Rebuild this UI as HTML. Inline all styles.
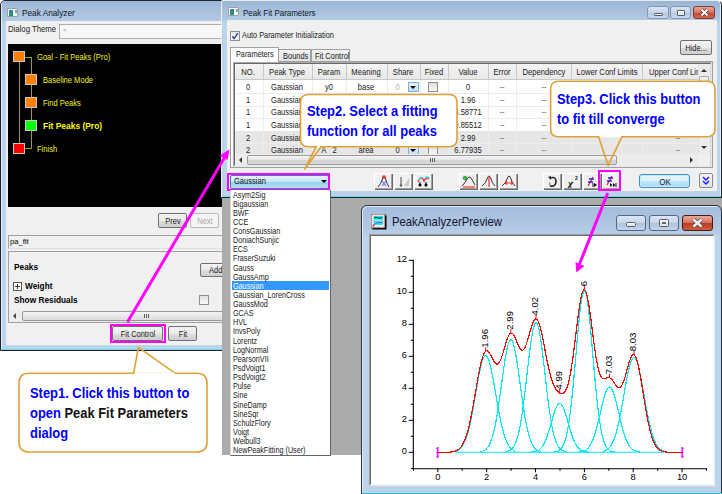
<!DOCTYPE html>
<html><head><meta charset="utf-8">
<style>
*{margin:0;padding:0;box-sizing:border-box}
html,body{width:722px;height:494px;overflow:hidden;background:#fff;font-family:"Liberation Sans",sans-serif;color:#000}
.a{position:absolute}
.t{position:absolute;white-space:nowrap;line-height:1}
.win{position:absolute;border:1px solid #2b3a4a;background:#bcd3ec}
.sx{transform-origin:0 0;transform:scaleX(.86)}
.btn{position:absolute;border:1px solid #707070;border-radius:2px;background:linear-gradient(#f2f2f2,#ebebeb 50%,#dddddd 51%,#cfcfcf);text-align:center}
.btn span{position:absolute;left:50%;top:2.5px;white-space:nowrap;font-size:9px;line-height:1;color:#1a1a1a;transform:translateX(-50%) scaleX(.83)}
</style></head><body>

<!-- gray workspace background -->
<div class="a" style="left:222px;top:197px;width:500px;height:258px;background:#ababab"></div>

<!-- ============ LEFT WINDOW: Peak Analyzer ============ -->
<div class="a" style="left:0;top:0;width:222px;height:351px;overflow:hidden">
 <div class="a" style="left:0;top:0;width:260px;height:351px;border:1px solid #1a2430;box-shadow:inset 1px 0 0 #e8f0f8;border-radius:5px 5px 0 0;background:linear-gradient(#9cb6d5,#b4cbe6 20px,#bcd3ec 21px)"></div>
 <div class="a" style="left:7px;top:8px;width:11px;height:9px;border:1px solid #9aa0a8;border-radius:1px;background:#f6f8fa"><div class="a" style="left:1px;top:1px;width:4px;height:6px;background:linear-gradient(#3a7ab8,#20a050)"></div><div class="a" style="left:7px;top:1px;width:2px;height:3px;background:linear-gradient(#80a8d0,#60c060)"></div></div>
 <div class="t sx" style="left:22px;top:8px;font-size:9.6px;color:#0e1626">Peak Analyzer</div>
 <div class="a" style="left:6px;top:21px;width:260px;height:324px;background:#f0f0f0"></div>
 <div class="a" style="left:1px;top:349px;width:260px;height:1px;background:#6ad8f0"></div>
 <div class="t sx" style="left:8px;top:24.5px;font-size:9px;color:#222">Dialog Theme</div>
 <div class="a" style="left:59px;top:24px;width:200px;height:15px;border:1px solid #abadb3;background:#f7f7f7"></div>
 <div class="t" style="left:63px;top:27px;font-size:6px;color:#aaa">×</div>
 <!-- black panel -->
 <div class="a" style="left:8px;top:44px;width:214px;height:163px;background:#000"></div>
 <!-- tree lines -->
 <div class="a" style="left:19px;top:57px;width:1px;height:92px;background:#a0a000"></div>
 <div class="a" style="left:25px;top:57px;width:6px;height:1px;background:#a0a000"></div>
 <div class="a" style="left:31px;top:57px;width:1px;height:92px;background:#a0a000"></div>
 <div class="a" style="left:25px;top:148px;width:6px;height:1px;background:#a0a000"></div>
 <!-- boxes -->
 <div class="a" style="left:13px;top:51px;width:12px;height:11px;border:1px solid #c8c8c8;background:#ff8000"></div>
 <div class="a" style="left:25px;top:74px;width:12px;height:11px;border:1px solid #c8c8c8;background:#ff8000"></div>
 <div class="a" style="left:25px;top:97px;width:12px;height:11px;border:1px solid #c8c8c8;background:#ff8000"></div>
 <div class="a" style="left:25px;top:120px;width:12px;height:11px;border:1px solid #c8c8c8;background:#00ff00"></div>
 <div class="a" style="left:13px;top:143px;width:12px;height:11px;border:1px solid #c8c8c8;background:#ff0000"></div>
 <div class="t sx" style="left:36.5px;top:53px;font-size:8.8px;color:#f0f020">Goal - Fit Peaks (Pro)</div>
 <div class="t sx" style="left:42.5px;top:76px;font-size:8.8px;color:#f0f020">Baseline Mode</div>
 <div class="t sx" style="left:42.5px;top:99px;font-size:8.8px;color:#f0f020">Find Peaks</div>
 <div class="t" style="left:42.5px;top:121px;font-size:9.6px;font-weight:bold;color:#ffff00;transform-origin:0 0;transform:scaleX(.88)">Fit Peaks (Pro)</div>
 <div class="t sx" style="left:36.5px;top:145px;font-size:8.8px;color:#f0f020">Finish</div>
 <!-- prev next -->
 <div class="btn" style="left:158px;top:213px;width:29px;height:15px"><span>Prev</span></div>
 <div class="btn" style="left:190px;top:213px;width:29px;height:15px;border-color:#b8b8b8;background:#f4f4f4"><span style="color:#a8a8a8">Next</span></div>
 <!-- pa_fit -->
 <div class="a" style="left:8px;top:235px;width:240px;height:14px;border:1px solid #a0a0a0;border-bottom-color:#e0e0e0;border-right:none;background:#f0f0f0"></div>
 <div class="t" style="left:10px;top:238px;font-size:7.6px">pa_fit</div>
 <!-- panel -->
 <div class="a" style="left:8px;top:251px;width:240px;height:72px;border:1px solid #a0a0a0;border-right:none"></div>
 <div class="t" style="left:14px;top:263px;font-size:8.3px;font-weight:bold">Peaks</div>
 <div class="btn" style="left:200px;top:263px;width:30px;height:14px"><span style="left:7.5px;top:1.5px;transform:scaleX(.83);transform-origin:0 0">Add</span></div>
 <div class="a" style="left:13px;top:282px;width:9px;height:9px;border:1px solid #555;background:#fff"></div>
 <div class="a" style="left:15px;top:286px;width:5px;height:1px;background:#333"></div>
 <div class="a" style="left:17px;top:284px;width:1px;height:5px;background:#333"></div>
 <div class="t" style="left:25px;top:282px;font-size:8.3px;font-weight:bold">Weight</div>
 <div class="t" style="left:14px;top:296px;font-size:8.3px;font-weight:bold">Show Residuals</div>
 <div class="a" style="left:199px;top:295px;width:10px;height:10px;border:1px solid #8f8f8f;background:linear-gradient(#e0e0e0,#fafafa)"></div>
 <!-- h scrollbar -->
 <div class="a" style="left:9px;top:310px;width:240px;height:12px;background:#ececec"></div>
 <div class="a" style="left:12.5px;top:313px;width:0;height:0;border-top:3px solid transparent;border-bottom:3px solid transparent;border-right:3px solid #444"></div>
 <div class="a" style="left:22px;top:311px;width:230px;height:10px;border:1px solid #999;border-radius:2px;background:linear-gradient(#f4f4f4,#dcdcdc)"></div>
 <div class="a" style="left:143.5px;top:314px;width:1px;height:4px;background:#606060;box-shadow:2px 0 0 #606060,4px 0 0 #606060"></div>
 <!-- fit control / fit -->
 <div class="btn" style="left:112px;top:326px;width:51px;height:15px"><span>Fit Control</span></div>
 <div class="btn" style="left:168px;top:326px;width:29px;height:15px"><span>Fit</span></div>
<div class="a" style="left:109.7px;top:324px;width:56px;height:18.6px;border:2.5px solid #ff00ff"></div>
</div>
<!-- ============ PFP WINDOW ============ -->
<div class="a" style="left:221px;top:0;width:501px;height:198px;overflow:hidden">
 <div class="a" style="left:0;top:0;width:501px;height:198px;border:1px solid #1a2430;border-left-color:#eef3f8;border-top-color:#e4ebf2;box-shadow:inset -1px 0 0 #e0ecf8;border-radius:2px 5px 0 0;background:linear-gradient(#9cb6d5,#b4cbe6 20px,#bcd3ec 21px)"></div>
 <div class="a" style="left:7px;top:7px;width:11px;height:9px;border:1px solid #9aa0a8;border-radius:1px;background:#f6f8fa"><div class="a" style="left:1px;top:1px;width:4px;height:6px;background:linear-gradient(#3a7ab8,#20a050)"></div><div class="a" style="left:7px;top:1px;width:2px;height:3px;background:linear-gradient(#80a8d0,#60c060)"></div></div>
 <div class="t" style="left:21.5px;top:8px;font-size:9.6px;color:#0e1626;transform-origin:0 0;transform:scaleX(.83)">Peak Fit Parameters</div>
 <!-- caption buttons -->
 <div class="a" style="left:426px;top:6px;width:22px;height:13px;border:1px solid #8598b0;border-radius:3px;background:linear-gradient(#d8e4f2,#c4d5ea 50%,#b2c7e0 51%,#c6d8ee)"></div>
 <div class="a" style="left:433px;top:12.5px;width:8.5px;height:3px;border:1px solid #555a66;border-radius:1px;background:#fff"></div>
 <div class="a" style="left:449px;top:6px;width:21px;height:13px;border:1px solid #8598b0;border-radius:3px;background:linear-gradient(#d8e4f2,#c4d5ea 50%,#b2c7e0 51%,#c6d8ee)"></div>
 <div class="a" style="left:456px;top:9.5px;width:8px;height:6px;border:1px solid #555a66;border-radius:1px;background:#e8e8e8;box-shadow:inset 1px 1px 0 #fff"></div>
 <div class="a" style="left:472px;top:6px;width:22px;height:13px;border:1px solid #7a3a30;border-radius:3px;background:linear-gradient(#eaa898,#d87060 50%,#c24a32 51%,#d06848)"></div>
 <svg class="a" style="left:477px;top:7px" width="13" height="11" viewBox="0 0 13 11"><path d="M3.5 2.5 L9.5 8.5 M9.5 2.5 L3.5 8.5" stroke="#4a2a2a" stroke-width="3.2"/><path d="M3.5 2.5 L9.5 8.5 M9.5 2.5 L3.5 8.5" stroke="#fff" stroke-width="2"/></svg>
 <div class="a" style="left:1px;top:196px;width:499px;height:1px;background:#6ad8f0"></div>
 <!-- content -->
 <div class="a" style="left:6px;top:20px;width:490px;height:171px;background:#f0f0f0"></div>
 <!-- auto param -->
 <div class="a" style="left:9px;top:31px;width:10px;height:10px;border:1px solid #8f8f8f;background:linear-gradient(#e6e6e6,#fafafa)"></div>
 <svg class="a" style="left:9px;top:31px" width="10" height="10" viewBox="0 0 10 10"><path d="M2.3 5.2 L4.2 7.6 L7.8 2.2" fill="none" stroke="#2840a8" stroke-width="1.4"/></svg>
 <div class="t" style="left:20.7px;top:31px;font-size:9.2px;color:#1a1a1a;transform-origin:0 0;transform:scaleX(.8)">Auto Parameter Initialization</div>
 <!-- hide -->
 <div class="btn" style="left:459px;top:40px;width:32px;height:15px"><span>Hide...</span></div>
 <!-- tabs -->
 <div class="a" style="left:57px;top:49px;width:33px;height:13px;border:1px solid #a0a0a0;border-bottom:none;background:linear-gradient(#f2f2f2,#e0e0e0)"></div>
 <div class="t" style="left:61.5px;top:51.5px;font-size:9px;color:#1a1a1a;transform-origin:0 0;transform:scaleX(.83)">Bounds</div>
 <div class="a" style="left:90px;top:49px;width:39px;height:13px;border:1px solid #a0a0a0;border-bottom:none;background:linear-gradient(#f2f2f2,#e0e0e0)"></div>
 <div class="t" style="left:93.5px;top:51.5px;font-size:9px;color:#1a1a1a;transform-origin:0 0;transform:scaleX(.83)">Fit Control</div>
 <div class="a" style="left:9px;top:61px;width:483px;height:107px;border:1px solid #a0a0a0;background:#fcfcfc"></div>
 <div class="a" style="left:9px;top:47px;width:49px;height:16px;border:1px solid #a0a0a0;border-bottom:none;background:#fcfcfc"></div>
 <div class="t" style="left:15.3px;top:49.5px;font-size:9px;color:#1a1a1a;transform-origin:0 0;transform:scaleX(.81)">Parameters</div>
<!-- TABLE -->
<div class="a" style="left:11.5px;top:62px;width:479px;height:105px;border:1px solid #a8a8a8;border-right-color:#e8e8e8;border-bottom-color:#e8e8e8;background:#fff"></div>
<div class="a" style="left:12.5px;top:63px;width:477px;height:103px;border:1px solid #6a6a6a;border-right-color:#d8d8d8;border-bottom-color:#d8d8d8;background:#fff"></div>
<div class="a" style="left:13.5px;top:64px;width:463px;height:16px;background:linear-gradient(#f4f4f4,#e8e8e8);border-bottom:1px solid #c8c8c8"></div>
<div class="a" style="left:13.5px;top:93.0px;width:463px;height:1px;background:#ececec"></div>
<div class="a" style="left:13.5px;top:105.6px;width:463px;height:1px;background:#ececec"></div>
<div class="a" style="left:13.5px;top:118.2px;width:463px;height:1px;background:#ececec"></div>
<div class="a" style="left:13.5px;top:130.8px;width:463px;height:1px;background:#ececec"></div>
<div class="a" style="left:13.5px;top:131.4px;width:463px;height:12.6px;background:#e6e6e6"></div>
<div class="a" style="left:13.5px;top:143.4px;width:463px;height:1px;background:#ececec"></div>
<div class="a" style="left:13.5px;top:144.0px;width:463px;height:12.6px;background:#e6e6e6"></div>
<div class="a" style="left:13.5px;top:156.0px;width:463px;height:1px;background:#ececec"></div>
<div class="a" style="left:41.6px;top:64px;width:1px;height:16px;background:#c8c8c8"></div>
<div class="a" style="left:41.6px;top:81px;width:1px;height:73px;background:#ececec"></div>
<div class="a" style="left:90.6px;top:64px;width:1px;height:16px;background:#c8c8c8"></div>
<div class="a" style="left:90.6px;top:81px;width:1px;height:73px;background:#ececec"></div>
<div class="a" style="left:124.5px;top:64px;width:1px;height:16px;background:#c8c8c8"></div>
<div class="a" style="left:124.5px;top:81px;width:1px;height:73px;background:#ececec"></div>
<div class="a" style="left:165.7px;top:64px;width:1px;height:16px;background:#c8c8c8"></div>
<div class="a" style="left:165.7px;top:81px;width:1px;height:73px;background:#ececec"></div>
<div class="a" style="left:198.7px;top:64px;width:1px;height:16px;background:#c8c8c8"></div>
<div class="a" style="left:198.7px;top:81px;width:1px;height:73px;background:#ececec"></div>
<div class="a" style="left:227.0px;top:64px;width:1px;height:16px;background:#c8c8c8"></div>
<div class="a" style="left:227.0px;top:81px;width:1px;height:73px;background:#ececec"></div>
<div class="a" style="left:266.8px;top:64px;width:1px;height:16px;background:#c8c8c8"></div>
<div class="a" style="left:266.8px;top:81px;width:1px;height:73px;background:#ececec"></div>
<div class="a" style="left:294.7px;top:64px;width:1px;height:16px;background:#c8c8c8"></div>
<div class="a" style="left:294.7px;top:81px;width:1px;height:73px;background:#ececec"></div>
<div class="a" style="left:350.3px;top:64px;width:1px;height:16px;background:#c8c8c8"></div>
<div class="a" style="left:350.3px;top:81px;width:1px;height:73px;background:#ececec"></div>
<div class="a" style="left:421.0px;top:64px;width:1px;height:16px;background:#c8c8c8"></div>
<div class="a" style="left:421.0px;top:81px;width:1px;height:73px;background:#ececec"></div>
<div class="a" style="left:477.0px;top:64px;width:1px;height:16px;background:#c8c8c8"></div>
<div class="a" style="left:477.0px;top:81px;width:1px;height:73px;background:#ececec"></div>
<div class="t" style="left:27.1px;top:67.5px;font-size:9.2px;color:#1a1a1a;transform:translateX(-50%) scaleX(.83)">NO.</div>
<div class="t" style="left:66.1px;top:67.5px;font-size:9.2px;color:#1a1a1a;transform:translateX(-50%) scaleX(.83)">Peak Type</div>
<div class="t" style="left:107.6px;top:67.5px;font-size:9.2px;color:#1a1a1a;transform:translateX(-50%) scaleX(.83)">Param</div>
<div class="t" style="left:145.1px;top:67.5px;font-size:9.2px;color:#1a1a1a;transform:translateX(-50%) scaleX(.83)">Meaning</div>
<div class="t" style="left:182.2px;top:67.5px;font-size:9.2px;color:#1a1a1a;transform:translateX(-50%) scaleX(.83)">Share</div>
<div class="t" style="left:212.9px;top:67.5px;font-size:9.2px;color:#1a1a1a;transform:translateX(-50%) scaleX(.83)">Fixed</div>
<div class="t" style="left:246.9px;top:67.5px;font-size:9.2px;color:#1a1a1a;transform:translateX(-50%) scaleX(.83)">Value</div>
<div class="t" style="left:280.8px;top:67.5px;font-size:9.2px;color:#1a1a1a;transform:translateX(-50%) scaleX(.83)">Error</div>
<div class="t" style="left:322.5px;top:67.5px;font-size:9.2px;color:#1a1a1a;transform:translateX(-50%) scaleX(.83)">Dependency</div>
<div class="t" style="left:385.6px;top:67.5px;font-size:9.2px;color:#1a1a1a;transform:translateX(-50%) scaleX(.83)">Lower Conf Limits</div>
<div class="a" style="left:422.0px;top:64px;width:55.0px;height:16px;overflow:hidden"><div class="t" style="left:6px;top:3.5px;font-size:9.2px;color:#1a1a1a;transform-origin:0 0;transform:scaleX(.83)">Upper Conf Limits</div></div>
<div class="t" style="left:27.1px;top:83.2px;font-size:9.1px;color:#1a1a1a;transform:translateX(-50%) scaleX(.83)">0</div>
<div class="t" style="left:66.1px;top:83.2px;font-size:9.1px;color:#1a1a1a;transform:translateX(-50%) scaleX(.83)">Gaussian</div>
<div class="t" style="left:107.6px;top:83.2px;font-size:9.1px;color:#1a1a1a;transform:translateX(-50%) scaleX(.83)">y0</div>
<div class="t" style="left:145.1px;top:83.2px;font-size:9.1px;color:#1a1a1a;transform:translateX(-50%) scaleX(.83)">base</div>
<div class="t" style="left:246.9px;top:83.2px;font-size:9.1px;color:#1a1a1a;transform:translateX(-50%) scaleX(.83)">0</div>
<div class="t" style="left:280.8px;top:83.2px;font-size:9.1px;color:#666;transform:translateX(-50%) scaleX(.83)">--</div>
<div class="t" style="left:322.5px;top:83.2px;font-size:9.1px;color:#666;transform:translateX(-50%) scaleX(.83)">--</div>
<div class="t" style="left:27.1px;top:95.8px;font-size:9.1px;color:#1a1a1a;transform:translateX(-50%) scaleX(.83)">1</div>
<div class="t" style="left:66.1px;top:95.8px;font-size:9.1px;color:#1a1a1a;transform:translateX(-50%) scaleX(.83)">Gaussian</div>
<div class="t" style="left:246.9px;top:95.8px;font-size:9.1px;color:#1a1a1a;transform:translateX(-50%) scaleX(.83)">1.96</div>
<div class="t" style="left:280.8px;top:95.8px;font-size:9.1px;color:#666;transform:translateX(-50%) scaleX(.83)">--</div>
<div class="t" style="left:322.5px;top:95.8px;font-size:9.1px;color:#666;transform:translateX(-50%) scaleX(.83)">--</div>
<div class="t" style="left:27.1px;top:108.4px;font-size:9.1px;color:#1a1a1a;transform:translateX(-50%) scaleX(.83)">1</div>
<div class="t" style="left:66.1px;top:108.4px;font-size:9.1px;color:#1a1a1a;transform:translateX(-50%) scaleX(.83)">Gaussian</div>
<div class="t" style="left:246.9px;top:108.4px;font-size:9.1px;color:#1a1a1a;transform:translateX(-50%) scaleX(.83)">5.58771</div>
<div class="t" style="left:280.8px;top:108.4px;font-size:9.1px;color:#666;transform:translateX(-50%) scaleX(.83)">--</div>
<div class="t" style="left:322.5px;top:108.4px;font-size:9.1px;color:#666;transform:translateX(-50%) scaleX(.83)">--</div>
<div class="t" style="left:27.1px;top:121.0px;font-size:9.1px;color:#1a1a1a;transform:translateX(-50%) scaleX(.83)">1</div>
<div class="t" style="left:66.1px;top:121.0px;font-size:9.1px;color:#1a1a1a;transform:translateX(-50%) scaleX(.83)">Gaussian</div>
<div class="t" style="left:246.9px;top:121.0px;font-size:9.1px;color:#1a1a1a;transform:translateX(-50%) scaleX(.83)">0.85512</div>
<div class="t" style="left:280.8px;top:121.0px;font-size:9.1px;color:#666;transform:translateX(-50%) scaleX(.83)">--</div>
<div class="t" style="left:322.5px;top:121.0px;font-size:9.1px;color:#666;transform:translateX(-50%) scaleX(.83)">--</div>
<div class="t" style="left:27.1px;top:133.6px;font-size:9.1px;color:#1a1a1a;transform:translateX(-50%) scaleX(.83)">2</div>
<div class="t" style="left:66.1px;top:133.6px;font-size:9.1px;color:#1a1a1a;transform:translateX(-50%) scaleX(.83)">Gaussian</div>
<div class="t" style="left:246.9px;top:133.6px;font-size:9.1px;color:#1a1a1a;transform:translateX(-50%) scaleX(.83)">2.99</div>
<div class="t" style="left:280.8px;top:133.6px;font-size:9.1px;color:#666;transform:translateX(-50%) scaleX(.83)">--</div>
<div class="t" style="left:322.5px;top:133.6px;font-size:9.1px;color:#666;transform:translateX(-50%) scaleX(.83)">--</div>
<div class="t" style="left:457.0px;top:133.6px;font-size:9.1px;color:#666;transform:translateX(-50%) scaleX(.83)">--</div>
<div class="t" style="left:27.1px;top:146.2px;font-size:9.1px;color:#1a1a1a;transform:translateX(-50%) scaleX(.83)">2</div>
<div class="t" style="left:66.1px;top:146.2px;font-size:9.1px;color:#1a1a1a;transform:translateX(-50%) scaleX(.83)">Gaussian</div>
<div class="t" style="left:107.6px;top:146.2px;font-size:9.1px;color:#1a1a1a;transform:translateX(-50%) scaleX(.83)">A&nbsp;&nbsp;&nbsp;2</div>
<div class="t" style="left:145.1px;top:146.2px;font-size:9.1px;color:#1a1a1a;transform:translateX(-50%) scaleX(.83)">area</div>
<div class="t" style="left:246.9px;top:146.2px;font-size:9.1px;color:#1a1a1a;transform:translateX(-50%) scaleX(.83)">6.77935</div>
<div class="t" style="left:280.8px;top:146.2px;font-size:9.1px;color:#666;transform:translateX(-50%) scaleX(.83)">--</div>
<div class="t" style="left:322.5px;top:146.2px;font-size:9.1px;color:#666;transform:translateX(-50%) scaleX(.83)">--</div>
<div class="t" style="left:457.0px;top:146.2px;font-size:9.1px;color:#666;transform:translateX(-50%) scaleX(.83)">--</div>
<div class="t" style="left:174.0px;top:83.2px;font-size:9.1px;color:#b0b0b0;transform:scaleX(.83)">0</div>
<div class="a" style="left:186.5px;top:81.8px;width:11px;height:10px;border:1px solid #7ab0d8;background:linear-gradient(#eaf4fc,#c4e0f6)"></div>
<div class="a" style="left:189.0px;top:86.0px;width:0;height:0;border-left:3px solid transparent;border-right:3px solid transparent;border-top:3px solid #000"></div>
<div class="a" style="left:206.5px;top:81.8px;width:10px;height:10px;border:1px solid #8f8f8f;background:linear-gradient(#dcdcdc,#f8f8f8)"></div>
<div class="t" style="left:174.0px;top:146.2px;font-size:9.1px;color:#222;transform:scaleX(.83)">0</div>
<div class="a" style="left:186.5px;top:144.8px;width:11px;height:10px;border:1px solid #7ab0d8;background:linear-gradient(#eaf4fc,#c4e0f6)"></div>
<div class="a" style="left:189.0px;top:149.0px;width:0;height:0;border-left:3px solid transparent;border-right:3px solid transparent;border-top:3px solid #000"></div>
<div class="a" style="left:206.5px;top:144.8px;width:10px;height:10px;border:1px solid #8f8f8f;background:linear-gradient(#dcdcdc,#f8f8f8)"></div>
<div class="a" style="left:477.0px;top:64px;width:12px;height:90px;background:#ececec;border-left:1px solid #e0e0e0"></div>
<div class="a" style="left:480.0px;top:69px;width:0;height:0;border-left:3px solid transparent;border-right:3px solid transparent;border-bottom:3px solid #333"></div>
<div class="a" style="left:478.0px;top:76px;width:10px;height:6px;border:1px solid #a8a8a8;border-bottom:none;border-radius:2px 2px 0 0;background:linear-gradient(#f4f4f4,#e0e0e0)"></div>
<div class="a" style="left:480.0px;top:146px;width:0;height:0;border-left:3px solid transparent;border-right:3px solid transparent;border-top:3px solid #333"></div>
<div class="a" style="left:13.5px;top:154px;width:475px;height:12px;background:#f0f0f0"></div>
<div class="a" style="left:13.5px;top:154px;width:463px;height:12px;background:#ececec"></div>
<div class="a" style="left:17.5px;top:157px;width:0;height:0;border-top:3px solid transparent;border-bottom:3px solid transparent;border-right:3px solid #333"></div>
<div class="a" style="left:469.0px;top:157px;width:0;height:0;border-top:3px solid transparent;border-bottom:3px solid transparent;border-left:3px solid #333"></div>
<div class="a" style="left:26.0px;top:155px;width:370px;height:10px;border:1px solid #9a9a9a;border-radius:2px;background:linear-gradient(#f6f6f6,#e4e4e4 50%,#d4d4d4 51%,#d8d8d8)"></div>
<div class="a" style="left:208.5px;top:157.5px;width:1px;height:4px;background:#606060"></div>
<div class="a" style="left:210.5px;top:157.5px;width:1px;height:4px;background:#606060"></div>
<div class="a" style="left:212.5px;top:157.5px;width:1px;height:4px;background:#606060"></div>
<!-- /TABLE -->
<!-- TOOLBAR -->
<style>
.tb{position:absolute;top:173px;width:18px;height:16px;background:#f0f0f0;border-top:1px solid #fff;border-left:1px solid #fff;box-shadow:1px 1px 0 #6a6a6a, inset -1px -1px 0 #a0a0a0}
.tb svg{position:absolute;left:1px;top:1px}
</style>
<div class="tb" style="left:153px"><svg width="15" height="13" viewBox="0 0 15 13"><path d="M2 12 Q5 9 6 5 Q7 1 8 1 Q9 1 10 5 Q11 9 13 12" fill="none" stroke="#333" stroke-width="1"/><circle cx="8" cy="2" r="1.8" fill="#e83030"/><path d="M6 6 L10 11 M10 6 L6 11" stroke="#6a6aff" stroke-width="1.2"/></svg></div>
<div class="tb" style="left:173px"><svg width="15" height="13" viewBox="0 0 15 13"><path d="M5 2 V10" stroke="#808080" stroke-width="1.5"/><circle cx="5" cy="10.5" r="1.2" fill="#606060"/><path d="M8 11 L13 3 V11 Z" fill="#c8c8c8"/></svg></div>
<div class="tb" style="left:193px"><svg width="15" height="13" viewBox="0 0 15 13"><path d="M2 7 Q4 2 6 3 Q7 4 8 6 Q10 2 13 4" fill="none" stroke="#e04040" stroke-width="1.5"/><path d="M3 5 Q5 1 7 3 M9 3 Q11 1 13 3" fill="none" stroke="#30d8e8" stroke-width="1.2"/><path d="M4 7 V10 M10 7 V10" stroke="#000" stroke-width="1"/><circle cx="4" cy="10" r="1.5" fill="#000"/><circle cx="10" cy="10" r="1.5" fill="#000"/></svg></div>
<div class="tb" style="left:238px"><svg width="15" height="13" viewBox="0 0 15 13"><path d="M1 11 Q4 8 6 4 Q8 1 9 2 Q11 4 14 10" fill="none" stroke="#333" stroke-width="1"/><circle cx="4" cy="3" r="1.8" fill="#10e010" stroke="#333" stroke-width="0.5"/><path d="M2 12 H14" stroke="#f03030" stroke-width="1.2"/></svg></div>
<div class="tb" style="left:258px"><svg width="15" height="13" viewBox="0 0 15 13"><path d="M1 11 Q5 8 6 4 Q7 1 8 1 Q9 1 10 4 Q11 8 14 11" fill="none" stroke="#333" stroke-width="1"/><path d="M8 1 V12" stroke="#f03030" stroke-width="1.2"/></svg></div>
<div class="tb" style="left:278px"><svg width="15" height="13" viewBox="0 0 15 13"><path d="M1 11 Q5 8 6 4 Q7 1 8 1 Q9 1 10 4 Q11 8 14 11" fill="none" stroke="#333" stroke-width="1"/><path d="M4 8 H12 M4 8 L6 6.5 M4 8 L6 9.5 M12 8 L10 6.5 M12 8 L10 9.5" stroke="#f03030" stroke-width="1.2"/></svg></div>
<div class="tb" style="left:322px"><svg width="15" height="13" viewBox="0 0 15 13"><path d="M5 3 Q11 1 11 6.5 Q11 12 5 11" fill="none" stroke="#222" stroke-width="1.6"/><path d="M3 2 L6 1 L6 5 Z" fill="#222"/><path d="M4 7 V11 L6 9 Z" fill="#888"/></svg></div>
<div class="tb" style="left:342px"><svg width="15" height="13" viewBox="0 0 15 13"><text x="3" y="12" font-family="Liberation Serif" font-style="italic" font-weight="bold" font-size="11" fill="#111">χ</text><text x="10" y="5" font-family="Liberation Sans" font-weight="bold" font-size="5" fill="#111">2</text></svg></div>
<div class="tb" style="left:362px"><svg width="15" height="13" viewBox="0 0 15 13"><path d="M3 11 L8 2" stroke="#f02020" stroke-width="1.3"/><path d="M4 4 H9 M3 7 H8" stroke="#2020f0" stroke-width="1.3"/><path d="M9 8 V12 L12 10 Z" fill="#111"/><path d="M8 8 V12" stroke="#111"/></svg></div>
<div class="tb" style="left:381px"><svg width="15" height="13" viewBox="0 0 15 13"><path d="M3 10 L8 1" stroke="#f02020" stroke-width="1.3"/><path d="M4 3 H9 M3 6 H8" stroke="#2020f0" stroke-width="1.3"/><path d="M6 8 V12 L8.5 10 Z M9 8 V12 L11.5 10 Z" fill="#111"/><path d="M12 8 V12" stroke="#111" stroke-width="1"/></svg></div>
<!-- OK -->
<div class="a" style="left:418px;top:174px;width:51px;height:14px;border:1px solid #3c8fc8;border-radius:3px;background:linear-gradient(#eaf6fd,#d9f0fc 50%,#bee6fd 51%,#a7d9f5);box-shadow:inset 0 0 0 1px #c8eafc"><span class="t" style="left:50%;top:2px;font-size:9.5px;color:#222;transform:translateX(-50%) scaleX(.85)">OK</span></div>
<!-- expand -->
<div class="a" style="left:478px;top:173px;width:14px;height:15px;border:1px solid #8a8a8a;border-radius:2px;background:linear-gradient(#f4f4f4,#e4e4e4)"><svg width="12" height="13" viewBox="0 0 12 13" style="position:absolute;left:0;top:0"><path d="M3 3 L6 6 L9 3 M3 7 L6 10 L9 7" fill="none" stroke="#1a1aff" stroke-width="1.4"/></svg></div>
<!-- combo -->
<div class="a" style="left:9px;top:175px;width:99px;height:14px;border:1px solid #3c7fb1;border-radius:2px;background:linear-gradient(#e5f4fc,#c4e5f6 50%,#98d1ef 51%,#b3e0f6)"></div>
<div class="t" style="left:13px;top:177px;font-size:9.1px;color:#111;transform-origin:0 0;transform:scaleX(.83)">Gaussian</div>
<div class="a" style="left:100px;top:180px;width:0;height:0;border-left:3px solid transparent;border-right:3px solid transparent;border-top:3px solid #000"></div>
<!-- magenta boxes -->
<div class="a" style="left:6px;top:172.5px;width:103px;height:18.5px;border:2.5px solid #ff00ff"></div>
<div class="a" style="left:376.5px;top:169.5px;width:23px;height:21.5px;border:2.5px solid #ff00ff"></div>
<!-- /TOOLBAR -->
</div>
<!-- PREVIEW -->
<div class="a" style="left:361px;top:205px;width:361px;height:300px;border:1px solid #2a3340;border-radius:6px 6px 0 0;box-shadow:inset 1px 1px 0 #dfeaf6;background:linear-gradient(#a3bddb,#b6cce6 28px,#bcd3ec 30px)"></div>
<div class="a" style="left:362px;top:493px;width:360px;height:1px;background:#38b8d0"></div>
<!-- icon -->
<svg class="a" style="left:371px;top:214px" width="16" height="16" viewBox="0 0 16 16"><rect x="1.5" y="1.5" width="14" height="14" fill="#000"/><rect x="0" y="0" width="14" height="14" fill="#fff" stroke="#222" stroke-width="0.8"/><rect x="1" y="1" width="12" height="12" fill="none" stroke="#f07070" stroke-width="0.8" stroke-dasharray="1.2 1"/><rect x="2.5" y="2" width="9.5" height="3.8" fill="#10f0f0"/><rect x="2.5" y="7" width="9.5" height="4" fill="#10f0f0"/><path d="M3 4 Q5 2.8 7 3.8 T11 3.5" fill="none" stroke="#111" stroke-width="0.9"/><path d="M2.5 6.4 H12" stroke="#e04040" stroke-width="0.7" stroke-dasharray="1 1"/><path d="M3 10.5 Q6 8 11 8.5" fill="none" stroke="#8040e0" stroke-width="0.9"/><circle cx="2.5" cy="11.5" r="1" fill="#e02020"/></svg>
<div class="t" style="left:391.5px;top:215px;font-size:13px;color:#101530;transform-origin:0 0;transform:scaleX(.87)">PeakAnalyzerPreview</div>
<!-- caption buttons -->
<div class="a" style="left:616px;top:215px;width:30px;height:16px;border:1px solid #55687f;border-radius:3px;background:linear-gradient(#dce7f4,#c6d6ea 50%,#adc3dd 51%,#c3d6ec)"></div>
<div class="a" style="left:626px;top:222px;width:10px;height:4.5px;border:1px solid #5a5f68;border-radius:1.5px;background:linear-gradient(#fff,#ddd)"></div>
<div class="a" style="left:649px;top:215px;width:30px;height:16px;border:1px solid #55687f;border-radius:3px;background:linear-gradient(#dce7f4,#c6d6ea 50%,#adc3dd 51%,#c3d6ec)"></div>
<div class="a" style="left:659px;top:218.5px;width:10px;height:8.5px;border:1px solid #5a5f68;border-radius:1.5px;background:linear-gradient(#fff,#ddd)"><div class="a" style="left:2px;top:2px;width:4px;height:2.5px;background:#60656e"></div></div>
<div class="a" style="left:682px;top:215px;width:31px;height:16px;border:1px solid #4a1a14;border-radius:3px;background:linear-gradient(#e8a898,#d47060 50%,#bc3a22 51%,#cc6040)"></div>
<svg class="a" style="left:690px;top:217px" width="15" height="12" viewBox="0 0 15 12"><path d="M3.5 2.5 L11.5 9.5 M11.5 2.5 L3.5 9.5" stroke="#4a4a4a" stroke-width="3.8"/><path d="M3.5 2.5 L11.5 9.5 M11.5 2.5 L3.5 9.5" stroke="#f0f0f0" stroke-width="2.4"/></svg>
<!-- plot area -->
<div class="a" style="left:369px;top:234px;width:346px;height:252px;border:1px solid #a0a0a0;border-right-color:#e8eef4;border-bottom-color:#e8eef4;background:#fff"><div class="a" style="left:0;top:0;width:344px;height:250px;border:1px solid #696969;border-right-color:#f4f4f4;border-bottom-color:#f4f4f4"></div></div>
<!-- PLOT -->
<svg class="a" style="left:0;top:0" width="722" height="494" viewBox="0 0 722 494" font-family="Liberation Sans">
<path d="M413.3 259.8 V468.8 H707" fill="none" stroke="#000" stroke-width="1.1"/>
<path d="M408.8 452.3 H413.3 M410.8 436.3 H413.3 M408.8 420.3 H413.3 M410.8 404.3 H413.3 M408.8 388.3 H413.3 M410.8 372.3 H413.3 M408.8 356.3 H413.3 M410.8 340.3 H413.3 M408.8 324.3 H413.3 M410.8 308.3 H413.3 M408.8 292.3 H413.3 M410.8 276.3 H413.3 M408.8 260.3 H413.3 M410.8 468.6 H413.3 M413.4 468.3 V470.8 M437.8 468.3 V472.3 M462.2 468.3 V470.8 M486.7 468.3 V472.3 M511.1 468.3 V470.8 M535.5 468.3 V472.3 M560.0 468.3 V470.8 M584.4 468.3 V472.3 M608.8 468.3 V470.8 M633.2 468.3 V472.3 M657.7 468.3 V470.8 M682.1 468.3 V472.3 M706.5 468.3 V470.8" stroke="#000" stroke-width="1"/>
<text x="407" y="453.9" text-anchor="end" font-size="9.3">0</text>
<text x="407" y="421.9" text-anchor="end" font-size="9.3">2</text>
<text x="407" y="389.9" text-anchor="end" font-size="9.3">4</text>
<text x="407" y="357.9" text-anchor="end" font-size="9.3">6</text>
<text x="407" y="325.9" text-anchor="end" font-size="9.3">8</text>
<text x="407" y="293.9" text-anchor="end" font-size="9.3">10</text>
<text x="407" y="261.9" text-anchor="end" font-size="9.3">12</text>
<text x="437.8" y="480" text-anchor="middle" font-size="9.3">0</text>
<text x="486.7" y="480" text-anchor="middle" font-size="9.3">2</text>
<text x="535.5" y="480" text-anchor="middle" font-size="9.3">4</text>
<text x="584.4" y="480" text-anchor="middle" font-size="9.3">6</text>
<text x="633.2" y="480" text-anchor="middle" font-size="9.3">8</text>
<text x="682.1" y="480" text-anchor="middle" font-size="9.3">10</text>
<polyline points="455.15,451.39 455.53,451.28 455.91,451.16 456.29,451.02 456.67,450.87 457.05,450.71 457.44,450.52 457.82,450.32 458.20,450.10 458.58,449.86 458.96,449.59 459.34,449.31 459.73,448.99 460.11,448.65 460.49,448.28 460.87,447.87 461.25,447.44 461.63,446.96 462.02,446.45 462.40,445.90 462.78,445.31 463.16,444.68 463.54,444.00 463.92,443.27 464.31,442.50 464.69,441.67 465.07,440.79 465.45,439.86 465.83,438.87 466.22,437.82 466.60,436.71 466.98,435.54 467.36,434.31 467.74,433.02 468.12,431.67 468.51,430.25 468.89,428.77 469.27,427.23 469.65,425.62 470.03,423.96 470.41,422.23 470.80,420.45 471.18,418.61 471.56,416.71 471.94,414.77 472.32,412.77 472.70,410.73 473.09,408.65 473.47,406.52 473.85,404.37 474.23,402.19 474.61,399.98 474.99,397.76 475.38,395.53 475.76,393.29 476.14,391.05 476.52,388.82 476.90,386.61 477.28,384.42 477.67,382.25 478.05,380.12 478.43,378.04 478.81,376.01 479.19,374.04 479.58,372.13 479.96,370.29 480.34,368.54 480.72,366.87 481.10,365.30 481.48,363.83 481.87,362.46 482.25,361.21 482.63,360.07 483.01,359.05 483.39,358.17 483.77,357.41 484.16,356.78 484.54,356.29 484.92,355.94 485.30,355.73 485.68,355.66 486.06,355.73 486.45,355.94 486.83,356.29 487.21,356.78 487.59,357.41 487.97,358.17 488.35,359.05 488.74,360.07 489.12,361.21 489.50,362.46 489.88,363.83 490.26,365.30 490.65,366.87 491.03,368.54 491.41,370.29 491.79,372.13 492.17,374.04 492.55,376.01 492.94,378.04 493.32,380.12 493.70,382.25 494.08,384.42 494.46,386.61 494.84,388.82 495.23,391.05 495.61,393.29 495.99,395.53 496.37,397.76 496.75,399.98 497.13,402.19 497.52,404.37 497.90,406.52 498.28,408.65 498.66,410.73 499.04,412.77 499.42,414.77 499.81,416.71 500.19,418.61 500.57,420.45 500.95,422.23 501.33,423.96 501.71,425.62 502.10,427.23 502.48,428.77 502.86,430.25 503.24,431.67 503.62,433.02 504.01,434.31 504.39,435.54 504.77,436.71 505.15,437.82 505.53,438.87 505.91,439.86 506.30,440.79 506.68,441.67 507.06,442.50 507.44,443.27 507.82,444.00 508.20,444.68 508.59,445.31 508.97,445.90 509.35,446.45 509.73,446.96 510.11,447.44 510.49,447.87 510.88,448.28 511.26,448.65 511.64,448.99 512.02,449.31 512.40,449.59 512.78,449.86 513.17,450.10 513.55,450.32 513.93,450.52 514.31,450.71 514.69,450.87 515.08,451.02 515.46,451.16 515.84,451.28 516.22,451.39" fill="none" stroke="#00e8f0" stroke-width="1.2" shape-rendering="crispEdges"/>
<polyline points="480.31,451.80 480.69,451.72 481.07,451.64 481.45,451.55 481.84,451.45 482.22,451.33 482.60,451.20 482.98,451.06 483.36,450.89 483.74,450.71 484.13,450.51 484.51,450.29 484.89,450.04 485.27,449.77 485.65,449.47 486.03,449.14 486.42,448.77 486.80,448.37 487.18,447.94 487.56,447.46 487.94,446.94 488.32,446.37 488.71,445.75 489.09,445.08 489.47,444.36 489.85,443.58 490.23,442.74 490.61,441.83 491.00,440.86 491.38,439.82 491.76,438.71 492.14,437.52 492.52,436.26 492.90,434.92 493.29,433.50 493.67,431.99 494.05,430.41 494.43,428.74 494.81,426.98 495.20,425.14 495.58,423.22 495.96,421.21 496.34,419.12 496.72,416.94 497.10,414.69 497.49,412.37 497.87,409.97 498.25,407.50 498.63,404.97 499.01,402.38 499.39,399.74 499.78,397.05 500.16,394.33 500.54,391.57 500.92,388.78 501.30,385.98 501.68,383.18 502.07,380.38 502.45,377.59 502.83,374.82 503.21,372.09 503.59,369.40 503.97,366.77 504.36,364.20 504.74,361.71 505.12,359.30 505.50,356.99 505.88,354.79 506.27,352.71 506.65,350.76 507.03,348.94 507.41,347.26 507.79,345.74 508.17,344.38 508.56,343.19 508.94,342.17 509.32,341.33 509.70,340.67 510.08,340.20 510.46,339.92 510.85,339.82 511.23,339.92 511.61,340.20 511.99,340.67 512.37,341.33 512.75,342.17 513.14,343.19 513.52,344.38 513.90,345.74 514.28,347.26 514.66,348.94 515.04,350.76 515.43,352.71 515.81,354.79 516.19,356.99 516.57,359.30 516.95,361.71 517.33,364.20 517.72,366.77 518.10,369.40 518.48,372.09 518.86,374.82 519.24,377.59 519.63,380.38 520.01,383.18 520.39,385.98 520.77,388.78 521.15,391.57 521.53,394.33 521.92,397.05 522.30,399.74 522.68,402.38 523.06,404.97 523.44,407.50 523.82,409.97 524.21,412.37 524.59,414.69 524.97,416.94 525.35,419.12 525.73,421.21 526.11,423.22 526.50,425.14 526.88,426.98 527.26,428.74 527.64,430.41 528.02,431.99 528.40,433.50 528.79,434.92 529.17,436.26 529.55,437.52 529.93,438.71 530.31,439.82 530.70,440.86 531.08,441.83 531.46,442.74 531.84,443.58 532.22,444.36 532.60,445.08 532.99,445.75 533.37,446.37 533.75,446.94 534.13,447.46 534.51,447.94 534.89,448.37 535.28,448.77 535.66,449.14 536.04,449.47 536.42,449.77 536.80,450.04 537.18,450.29 537.57,450.51 537.95,450.71 538.33,450.89 538.71,451.06 539.09,451.20 539.47,451.33 539.86,451.45 540.24,451.55 540.62,451.64 541.00,451.72 541.38,451.80" fill="none" stroke="#00e8f0" stroke-width="1.2" shape-rendering="crispEdges"/>
<polyline points="505.47,451.92 505.85,451.86 506.23,451.79 506.62,451.72 507.00,451.63 507.38,451.53 507.76,451.42 508.14,451.29 508.52,451.15 508.91,450.99 509.29,450.81 509.67,450.61 510.05,450.39 510.43,450.13 510.82,449.86 511.20,449.55 511.58,449.20 511.96,448.82 512.34,448.40 512.72,447.94 513.11,447.43 513.49,446.87 513.87,446.26 514.25,445.60 514.63,444.87 515.01,444.08 515.40,443.22 515.78,442.29 516.16,441.29 516.54,440.20 516.92,439.04 517.30,437.78 517.69,436.44 518.07,435.01 518.45,433.48 518.83,431.85 519.21,430.12 519.59,428.29 519.98,426.36 520.36,424.32 520.74,422.18 521.12,419.93 521.50,417.58 521.89,415.12 522.27,412.57 522.65,409.91 523.03,407.16 523.41,404.32 523.79,401.39 524.18,398.38 524.56,395.30 524.94,392.15 525.32,388.94 525.70,385.69 526.08,382.39 526.47,379.07 526.85,375.72 527.23,372.37 527.61,369.02 527.99,365.70 528.37,362.40 528.76,359.15 529.14,355.95 529.52,352.83 529.90,349.79 530.28,346.86 530.66,344.03 531.05,341.34 531.43,338.78 531.81,336.37 532.19,334.13 532.57,332.07 532.95,330.19 533.34,328.51 533.72,327.04 534.10,325.78 534.48,324.73 534.86,323.92 535.25,323.33 535.63,322.98 536.01,322.86 536.39,322.98 536.77,323.33 537.15,323.92 537.54,324.73 537.92,325.78 538.30,327.04 538.68,328.51 539.06,330.19 539.44,332.07 539.83,334.13 540.21,336.37 540.59,338.78 540.97,341.34 541.35,344.03 541.73,346.86 542.12,349.79 542.50,352.83 542.88,355.95 543.26,359.15 543.64,362.40 544.02,365.70 544.41,369.02 544.79,372.37 545.17,375.72 545.55,379.07 545.93,382.39 546.32,385.69 546.70,388.94 547.08,392.15 547.46,395.30 547.84,398.38 548.22,401.39 548.61,404.32 548.99,407.16 549.37,409.91 549.75,412.57 550.13,415.12 550.51,417.58 550.90,419.93 551.28,422.18 551.66,424.32 552.04,426.36 552.42,428.29 552.80,430.12 553.19,431.85 553.57,433.48 553.95,435.01 554.33,436.44 554.71,437.78 555.09,439.04 555.48,440.20 555.86,441.29 556.24,442.29 556.62,443.22 557.00,444.08 557.38,444.87 557.77,445.60 558.15,446.26 558.53,446.87 558.91,447.43 559.29,447.94 559.68,448.40 560.06,448.82 560.44,449.20 560.82,449.55 561.20,449.86 561.58,450.13 561.97,450.39 562.35,450.61 562.73,450.81 563.11,450.99 563.49,451.15 563.87,451.29 564.26,451.42 564.64,451.53 565.02,451.63 565.40,451.72 565.78,451.79 566.16,451.86 566.55,451.92" fill="none" stroke="#00e8f0" stroke-width="1.2" shape-rendering="crispEdges"/>
<polyline points="529.17,452.23 529.55,452.22 529.93,452.20 530.31,452.19 530.70,452.17 531.08,452.15 531.46,452.12 531.84,452.09 532.22,452.06 532.60,452.02 532.99,451.98 533.37,451.93 533.75,451.87 534.13,451.81 534.51,451.74 534.89,451.66 535.28,451.57 535.66,451.47 536.04,451.35 536.42,451.23 536.80,451.08 537.18,450.93 537.57,450.75 537.95,450.56 538.33,450.34 538.71,450.11 539.09,449.85 539.47,449.56 539.86,449.25 540.24,448.91 540.62,448.54 541.00,448.14 541.38,447.71 541.76,447.24 542.15,446.73 542.53,446.18 542.91,445.60 543.29,444.97 543.67,444.31 544.06,443.60 544.44,442.84 544.82,442.04 545.20,441.20 545.58,440.31 545.96,439.38 546.35,438.41 546.73,437.39 547.11,436.33 547.49,435.23 547.87,434.09 548.25,432.91 548.64,431.70 549.02,430.46 549.40,429.19 549.78,427.90 550.16,426.59 550.54,425.27 550.93,423.93 551.31,422.59 551.69,421.25 552.07,419.92 552.45,418.60 552.83,417.30 553.22,416.02 553.60,414.77 553.98,413.56 554.36,412.39 554.74,411.27 555.13,410.20 555.51,409.20 555.89,408.26 556.27,407.39 556.65,406.60 557.03,405.89 557.42,405.27 557.80,404.74 558.18,404.29 558.56,403.95 558.94,403.70 559.32,403.55 559.71,403.50 560.09,403.55 560.47,403.70 560.85,403.95 561.23,404.29 561.61,404.74 562.00,405.27 562.38,405.89 562.76,406.60 563.14,407.39 563.52,408.26 563.90,409.20 564.29,410.20 564.67,411.27 565.05,412.39 565.43,413.56 565.81,414.77 566.19,416.02 566.58,417.30 566.96,418.60 567.34,419.92 567.72,421.25 568.10,422.59 568.49,423.93 568.87,425.27 569.25,426.59 569.63,427.90 570.01,429.19 570.39,430.46 570.78,431.70 571.16,432.91 571.54,434.09 571.92,435.23 572.30,436.33 572.68,437.39 573.07,438.41 573.45,439.38 573.83,440.31 574.21,441.20 574.59,442.04 574.97,442.84 575.36,443.60 575.74,444.31 576.12,444.97 576.50,445.60 576.88,446.18 577.26,446.73 577.65,447.24 578.03,447.71 578.41,448.14 578.79,448.54 579.17,448.91 579.56,449.25 579.94,449.56 580.32,449.85 580.70,450.11 581.08,450.34 581.46,450.56 581.85,450.75 582.23,450.93 582.61,451.08 582.99,451.23 583.37,451.35 583.75,451.47 584.14,451.57 584.52,451.66 584.90,451.74 585.28,451.81 585.66,451.87 586.04,451.93 586.43,451.98 586.81,452.02 587.19,452.06 587.57,452.09 587.95,452.12 588.33,452.15 588.72,452.17 589.10,452.19 589.48,452.20 589.86,452.22 590.24,452.23" fill="none" stroke="#00e8f0" stroke-width="1.2" shape-rendering="crispEdges"/>
<polyline points="553.84,452.07 554.22,452.03 554.61,451.99 554.99,451.93 555.37,451.87 555.75,451.80 556.13,451.71 556.51,451.62 556.90,451.51 557.28,451.38 557.66,451.24 558.04,451.08 558.42,450.89 558.80,450.69 559.19,450.45 559.57,450.18 559.95,449.88 560.33,449.55 560.71,449.17 561.10,448.75 561.48,448.28 561.86,447.76 562.24,447.18 562.62,446.54 563.00,445.83 563.39,445.05 563.77,444.19 564.15,443.25 564.53,442.23 564.91,441.10 565.29,439.88 565.68,438.55 566.06,437.12 566.44,435.56 566.82,433.89 567.20,432.09 567.58,430.16 567.97,428.09 568.35,425.88 568.73,423.54 569.11,421.04 569.49,418.41 569.87,415.62 570.26,412.69 570.64,409.61 571.02,406.38 571.40,403.02 571.78,399.51 572.16,395.87 572.55,392.11 572.93,388.22 573.31,384.22 573.69,380.13 574.07,375.94 574.46,371.67 574.84,367.34 575.22,362.96 575.60,358.55 575.98,354.12 576.36,349.70 576.75,345.29 577.13,340.92 577.51,336.62 577.89,332.39 578.27,328.26 578.65,324.25 579.04,320.39 579.42,316.69 579.80,313.16 580.18,309.84 580.56,306.74 580.94,303.88 581.33,301.27 581.71,298.92 582.09,296.87 582.47,295.10 582.85,293.64 583.23,292.50 583.62,291.68 584.00,291.19 584.38,291.02 584.76,291.19 585.14,291.68 585.53,292.50 585.91,293.64 586.29,295.10 586.67,296.87 587.05,298.92 587.43,301.27 587.82,303.88 588.20,306.74 588.58,309.84 588.96,313.16 589.34,316.69 589.72,320.39 590.11,324.25 590.49,328.26 590.87,332.39 591.25,336.62 591.63,340.92 592.01,345.29 592.40,349.70 592.78,354.12 593.16,358.55 593.54,362.96 593.92,367.34 594.30,371.67 594.69,375.94 595.07,380.13 595.45,384.22 595.83,388.22 596.21,392.11 596.60,395.87 596.98,399.51 597.36,403.02 597.74,406.38 598.12,409.61 598.50,412.69 598.89,415.62 599.27,418.41 599.65,421.04 600.03,423.54 600.41,425.88 600.79,428.09 601.18,430.16 601.56,432.09 601.94,433.89 602.32,435.56 602.70,437.12 603.08,438.55 603.47,439.88 603.85,441.10 604.23,442.23 604.61,443.25 604.99,444.19 605.37,445.05 605.76,445.83 606.14,446.54 606.52,447.18 606.90,447.76 607.28,448.28 607.66,448.75 608.05,449.17 608.43,449.55 608.81,449.88 609.19,450.18 609.57,450.45 609.96,450.69 610.34,450.89 610.72,451.08 611.10,451.24 611.48,451.38 611.86,451.51 612.25,451.62 612.63,451.71 613.01,451.80 613.39,451.87 613.77,451.93 614.15,451.99 614.54,452.03 614.92,452.07" fill="none" stroke="#00e8f0" stroke-width="1.2" shape-rendering="crispEdges"/>
<polyline points="579.01,452.05 579.39,452.01 579.77,451.97 580.15,451.92 580.53,451.87 580.91,451.81 581.30,451.74 581.68,451.66 582.06,451.57 582.44,451.48 582.82,451.37 583.20,451.25 583.59,451.12 583.97,450.97 584.35,450.81 584.73,450.63 585.11,450.44 585.49,450.22 585.88,449.98 586.26,449.72 586.64,449.43 587.02,449.12 587.40,448.78 587.78,448.41 588.17,448.01 588.55,447.58 588.93,447.11 589.31,446.60 589.69,446.06 590.08,445.47 590.46,444.85 590.84,444.18 591.22,443.47 591.60,442.71 591.98,441.90 592.37,441.04 592.75,440.14 593.13,439.19 593.51,438.18 593.89,437.13 594.27,436.02 594.66,434.87 595.04,433.66 595.42,432.41 595.80,431.11 596.18,429.76 596.56,428.37 596.95,426.93 597.33,425.46 597.71,423.95 598.09,422.41 598.47,420.84 598.85,419.25 599.24,417.63 599.62,416.00 600.00,414.35 600.38,412.71 600.76,411.06 601.15,409.41 601.53,407.78 601.91,406.17 602.29,404.58 602.67,403.02 603.05,401.50 603.44,400.03 603.82,398.60 604.20,397.23 604.58,395.93 604.96,394.69 605.34,393.53 605.73,392.45 606.11,391.45 606.49,390.55 606.87,389.74 607.25,389.03 607.63,388.42 608.02,387.92 608.40,387.53 608.78,387.25 609.16,387.08 609.54,387.02 609.92,387.08 610.31,387.25 610.69,387.53 611.07,387.92 611.45,388.42 611.83,389.03 612.21,389.74 612.60,390.55 612.98,391.45 613.36,392.45 613.74,393.53 614.12,394.69 614.51,395.93 614.89,397.23 615.27,398.60 615.65,400.03 616.03,401.50 616.41,403.02 616.80,404.58 617.18,406.17 617.56,407.78 617.94,409.41 618.32,411.06 618.70,412.71 619.09,414.35 619.47,416.00 619.85,417.63 620.23,419.25 620.61,420.84 620.99,422.41 621.38,423.95 621.76,425.46 622.14,426.93 622.52,428.37 622.90,429.76 623.28,431.11 623.67,432.41 624.05,433.66 624.43,434.87 624.81,436.02 625.19,437.13 625.58,438.18 625.96,439.19 626.34,440.14 626.72,441.04 627.10,441.90 627.48,442.71 627.87,443.47 628.25,444.18 628.63,444.85 629.01,445.47 629.39,446.06 629.77,446.60 630.16,447.11 630.54,447.58 630.92,448.01 631.30,448.41 631.68,448.78 632.06,449.12 632.45,449.43 632.83,449.72 633.21,449.98 633.59,450.22 633.97,450.44 634.35,450.63 634.74,450.81 635.12,450.97 635.50,451.12 635.88,451.25 636.26,451.37 636.64,451.48 637.03,451.57 637.41,451.66 637.79,451.74 638.17,451.81 638.55,451.87 638.94,451.92 639.32,451.97 639.70,452.01 640.08,452.05" fill="none" stroke="#00e8f0" stroke-width="1.2" shape-rendering="crispEdges"/>
<polyline points="603.44,451.39 603.82,451.28 604.20,451.16 604.58,451.02 604.96,450.87 605.34,450.70 605.73,450.52 606.11,450.32 606.49,450.10 606.87,449.86 607.25,449.60 607.63,449.31 608.02,449.00 608.40,448.66 608.78,448.29 609.16,447.89 609.54,447.45 609.92,446.99 610.31,446.48 610.69,445.94 611.07,445.35 611.45,444.73 611.83,444.05 612.21,443.34 612.60,442.57 612.98,441.75 613.36,440.88 613.74,439.96 614.12,438.98 614.51,437.95 614.89,436.86 615.27,435.71 615.65,434.49 616.03,433.22 616.41,431.89 616.80,430.50 617.18,429.04 617.56,427.52 617.94,425.95 618.32,424.31 618.70,422.61 619.09,420.86 619.47,419.05 619.85,417.19 620.23,415.28 620.61,413.32 620.99,411.32 621.38,409.27 621.76,407.19 622.14,405.08 622.52,402.94 622.90,400.78 623.28,398.61 623.67,396.42 624.05,394.23 624.43,392.03 624.81,389.85 625.19,387.68 625.58,385.54 625.96,383.42 626.34,381.34 626.72,379.30 627.10,377.31 627.48,375.38 627.87,373.52 628.25,371.72 628.63,370.01 629.01,368.38 629.39,366.84 629.77,365.40 630.16,364.07 630.54,362.84 630.92,361.73 631.30,360.74 631.68,359.87 632.06,359.13 632.45,358.52 632.83,358.04 633.21,357.70 633.59,357.49 633.97,357.42 634.35,357.49 634.74,357.70 635.12,358.04 635.50,358.52 635.88,359.13 636.26,359.87 636.64,360.74 637.03,361.73 637.41,362.84 637.79,364.07 638.17,365.40 638.55,366.84 638.94,368.38 639.32,370.01 639.70,371.72 640.08,373.52 640.46,375.38 640.84,377.31 641.23,379.30 641.61,381.34 641.99,383.42 642.37,385.54 642.75,387.68 643.13,389.85 643.52,392.03 643.90,394.23 644.28,396.42 644.66,398.61 645.04,400.78 645.42,402.94 645.81,405.08 646.19,407.19 646.57,409.27 646.95,411.32 647.33,413.32 647.71,415.28 648.10,417.19 648.48,419.05 648.86,420.86 649.24,422.61 649.62,424.31 650.01,425.95 650.39,427.52 650.77,429.04 651.15,430.50 651.53,431.89 651.91,433.22 652.30,434.49 652.68,435.71 653.06,436.86 653.44,437.95 653.82,438.98 654.20,439.96 654.59,440.88 654.97,441.75 655.35,442.57 655.73,443.34 656.11,444.05 656.49,444.73 656.88,445.35 657.26,445.94 657.64,446.48 658.02,446.99 658.40,447.45 658.78,447.89 659.17,448.29 659.55,448.66 659.93,449.00 660.31,449.31 660.69,449.60 661.07,449.86 661.46,450.10 661.84,450.32 662.22,450.52 662.60,450.70 662.98,450.87 663.37,451.02 663.75,451.16 664.13,451.28 664.51,451.39" fill="none" stroke="#00e8f0" stroke-width="1.2" shape-rendering="crispEdges"/>
<polyline points="437.80,452.30 438.41,452.30 439.02,452.30 439.63,452.30 440.24,452.29 440.85,452.29 441.46,452.29 442.08,452.29 442.69,452.29 443.30,452.28 443.91,452.28 444.52,452.27 445.13,452.26 445.74,452.25 446.35,452.24 446.96,452.22 447.57,452.20 448.18,452.18 448.79,452.15 449.40,452.12 450.01,452.07 450.63,452.02 451.24,451.96 451.85,451.88 452.46,451.79 453.07,451.68 453.68,451.56 454.29,451.41 454.90,451.23 455.51,451.02 456.12,450.78 456.73,450.49 457.34,450.17 457.95,449.79 458.57,449.35 459.18,448.85 459.79,448.28 460.40,447.64 461.01,446.91 461.62,446.08 462.23,445.16 462.84,444.13 463.45,442.98 464.06,441.71 464.67,440.31 465.28,438.77 465.89,437.09 466.51,435.26 467.12,433.28 467.73,431.15 468.34,428.85 468.95,426.40 469.56,423.80 470.17,421.05 470.78,418.15 471.39,415.11 472.00,411.95 472.61,408.68 473.22,405.30 473.83,401.85 474.44,398.33 475.06,394.77 475.67,391.19 476.28,387.61 476.89,384.07 477.50,380.58 478.11,377.17 478.72,373.88 479.33,370.73 479.94,367.73 480.55,364.93 481.16,362.34 481.77,359.98 482.38,357.87 483.00,356.02 483.61,354.45 484.22,353.16 484.83,352.16 485.44,351.44 486.05,351.01 486.66,350.84 487.27,350.94 487.88,351.27 488.49,351.82 489.10,352.56 489.71,353.46 490.32,354.48 490.94,355.60 491.55,356.78 492.16,357.98 492.77,359.16 493.38,360.29 493.99,361.32 494.60,362.23 495.21,362.98 495.82,363.55 496.43,363.91 497.04,364.05 497.65,363.94 498.26,363.57 498.88,362.96 499.49,362.09 500.10,360.99 500.71,359.65 501.32,358.11 501.93,356.38 502.54,354.51 503.15,352.52 503.76,350.44 504.37,348.33 504.98,346.21 505.59,344.14 506.20,342.15 506.81,340.28 507.43,338.57 508.04,337.05 508.65,335.75 509.26,334.70 509.87,333.90 510.48,333.39 511.09,333.15 511.70,333.18 512.31,333.49 512.92,334.05 513.53,334.85 514.14,335.85 514.75,337.02 515.37,338.33 515.98,339.75 516.59,341.21 517.20,342.69 517.81,344.15 518.42,345.52 519.03,346.79 519.64,347.90 520.25,348.82 520.86,349.53 521.47,349.99 522.08,350.19 522.69,350.12 523.31,349.77 523.92,349.13 524.53,348.23 525.14,347.05 525.75,345.64 526.36,344.01 526.97,342.19 527.58,340.22 528.19,338.13 528.80,335.97 529.41,333.77 530.02,331.59 530.63,329.46 531.24,327.43 531.86,325.54 532.47,323.83 533.08,322.33 533.69,321.08 534.30,320.11 534.91,319.43 535.52,319.08 536.13,319.05 536.74,319.36 537.35,320.01 537.96,320.99 538.57,322.29 539.18,323.91 539.80,325.82 540.41,327.99 541.02,330.41 541.63,333.03 542.24,335.84 542.85,338.79 543.46,341.86 544.07,345.00 544.68,348.19 545.29,351.39 545.90,354.57 546.51,357.70 547.12,360.76 547.74,363.72 548.35,366.56 548.96,369.27 549.57,371.83 550.18,374.23 550.79,376.47 551.40,378.54 552.01,380.45 552.62,382.19 553.23,383.78 553.84,385.21 554.45,386.51 555.06,387.67 555.67,388.70 556.29,389.62 556.90,390.44 557.51,391.15 558.12,391.77 558.73,392.31 559.34,392.75 559.95,393.10 560.56,393.36 561.17,393.52 561.78,393.57 562.39,393.50 563.00,393.29 563.61,392.94 564.23,392.41 564.84,391.70 565.45,390.78 566.06,389.63 566.67,388.23 567.28,386.58 567.89,384.64 568.50,382.42 569.11,379.89 569.72,377.06 570.33,373.92 570.94,370.48 571.55,366.75 572.16,362.75 572.78,358.49 573.39,354.00 574.00,349.32 574.61,344.49 575.22,339.56 575.83,334.56 576.44,329.57 577.05,324.62 577.66,319.79 578.27,315.13 578.88,310.69 579.49,306.55 580.10,302.76 580.72,299.36 581.33,296.42 581.94,293.96 582.55,292.03 583.16,290.66 583.77,289.86 584.38,289.65 584.99,290.03 585.60,291.00 586.21,292.53 586.82,294.61 587.43,297.20 588.04,300.26 588.66,303.75 589.27,307.61 589.88,311.78 590.49,316.21 591.10,320.82 591.71,325.55 592.32,330.35 592.93,335.13 593.54,339.86 594.15,344.45 594.76,348.87 595.37,353.06 595.98,356.99 596.60,360.62 597.21,363.92 597.82,366.87 598.43,369.48 599.04,371.72 599.65,373.61 600.26,375.16 600.87,376.38 601.48,377.30 602.09,377.96 602.70,378.37 603.31,378.58 603.92,378.63 604.53,378.55 605.15,378.39 605.76,378.19 606.37,377.97 606.98,377.77 607.59,377.63 608.20,377.57 608.81,377.60 609.42,377.75 610.03,378.02 610.64,378.41 611.25,378.93 611.86,379.56 612.47,380.28 613.09,381.09 613.70,381.96 614.31,382.86 614.92,383.76 615.53,384.63 616.14,385.44 616.75,386.16 617.36,386.77 617.97,387.22 618.58,387.49 619.19,387.57 619.80,387.43 620.41,387.06 621.02,386.45 621.64,385.60 622.25,384.51 622.86,383.20 623.47,381.67 624.08,379.95 624.69,378.06 625.30,376.03 625.91,373.89 626.52,371.69 627.13,369.47 627.74,367.25 628.35,365.10 628.96,363.05 629.58,361.14 630.19,359.41 630.80,357.90 631.41,356.65 632.02,355.69 632.63,355.04 633.24,354.73 633.85,354.76 634.46,355.16 635.07,355.92 635.68,357.04 636.29,358.52 636.90,360.34 637.52,362.49 638.13,364.95 638.74,367.69 639.35,370.68 639.96,373.89 640.57,377.29 641.18,380.84 641.79,384.51 642.40,388.26 643.01,392.05 643.62,395.86 644.23,399.66 644.84,403.40 645.46,407.08 646.07,410.65 646.68,414.10 647.29,417.42 647.90,420.58 648.51,423.58 649.12,426.41 649.73,429.05 650.34,431.52 650.95,433.80 651.56,435.90 652.17,437.83 652.78,439.58 653.39,441.17 654.01,442.60 654.62,443.88 655.23,445.03 655.84,446.04 656.45,446.94 657.06,447.73 657.67,448.42 658.28,449.01 658.89,449.53 659.50,449.98 660.11,450.36 660.72,450.69 661.33,450.97 661.95,451.20 662.56,451.40 663.17,451.56 663.78,451.70 664.39,451.81 665.00,451.91 665.61,451.98 666.22,452.05 666.83,452.10 667.44,452.14 668.05,452.17 668.66,452.20 669.27,452.22 669.88,452.24 670.50,452.25 671.11,452.26 671.72,452.27 672.33,452.28 672.94,452.28 673.55,452.29 674.16,452.29 674.77,452.29 675.38,452.29 675.99,452.30 676.60,452.30 677.21,452.30 677.82,452.30 678.44,452.30 679.05,452.30 679.66,452.30 680.27,452.30 680.88,452.30 681.49,452.30 682.10,452.30" fill="none" stroke="#ff0000" stroke-width="1.2" shape-rendering="crispEdges"/>
<path d="M456.1 452.3 H663.8" stroke="#00e8f0" stroke-width="1.1"/>
<path d="M485.7 351.2 V347.2" stroke="#ff0000" stroke-width="1"/>
<text transform="translate(487.8,347.7) rotate(-90)" font-size="9.6">1.96</text>
<path d="M510.8 333.2 V329.2" stroke="#ff0000" stroke-width="1"/>
<text transform="translate(512.9,329.7) rotate(-90)" font-size="9.6">2.99</text>
<path d="M536.0 319.0 V315.0" stroke="#ff0000" stroke-width="1"/>
<text transform="translate(538.1,315.5) rotate(-90)" font-size="9.6">4.02</text>
<path d="M559.7 393.0 V389.0" stroke="#ff0000" stroke-width="1"/>
<text transform="translate(561.8,389.5) rotate(-90)" font-size="9.6">4.99</text>
<path d="M584.4 289.7 V285.7" stroke="#ff0000" stroke-width="1"/>
<text transform="translate(586.5,286.2) rotate(-90)" font-size="9.6">6</text>
<path d="M609.5 377.8 V373.8" stroke="#ff0000" stroke-width="1"/>
<text transform="translate(611.6,374.3) rotate(-90)" font-size="9.6">7.03</text>
<path d="M634.0 354.8 V350.8" stroke="#ff0000" stroke-width="1"/>
<text transform="translate(636.1,351.3) rotate(-90)" font-size="9.6">8.03</text>
<path d="M437.8 447 V458 M437.8 448.5 h-1.5 M437.8 452.5 h-1.5 M437.8 456.5 h-1.5" stroke="#ff00ff" stroke-width="1.4"/>
<path d="M682.1 447 V458 M682.1 448.5 h1.5 M682.1 452.5 h1.5 M682.1 456.5 h1.5" stroke="#ff00ff" stroke-width="1.4"/>
</svg>
<!-- /PLOT -->
<!-- /PREVIEW -->
<!-- DROPDOWN -->
<div class="a" style="left:230px;top:190px;width:101px;height:266px;border:1px solid #646464;border-top:none;border-left-color:#d8d8d8;background:#fff"></div>
<div class="a" style="left:231.5px;top:281px;width:97.5px;height:9.3px;background:#3399ff"></div>
<div class="t" style="left:233px;top:190.5px;font-size:8.7px;color:#1a1a1a;transform-origin:0 0;transform:scaleX(.83)">Asym2Sig</div>
<div class="t" style="left:233px;top:199.6px;font-size:8.7px;color:#1a1a1a;transform-origin:0 0;transform:scaleX(.83)">Bigaussian</div>
<div class="t" style="left:233px;top:208.8px;font-size:8.7px;color:#1a1a1a;transform-origin:0 0;transform:scaleX(.83)">BWF</div>
<div class="t" style="left:233px;top:217.9px;font-size:8.7px;color:#1a1a1a;transform-origin:0 0;transform:scaleX(.83)">CCE</div>
<div class="t" style="left:233px;top:227.0px;font-size:8.7px;color:#1a1a1a;transform-origin:0 0;transform:scaleX(.83)">ConsGaussian</div>
<div class="t" style="left:233px;top:236.2px;font-size:8.7px;color:#1a1a1a;transform-origin:0 0;transform:scaleX(.83)">DoniachSunjic</div>
<div class="t" style="left:233px;top:245.3px;font-size:8.7px;color:#1a1a1a;transform-origin:0 0;transform:scaleX(.83)">ECS</div>
<div class="t" style="left:233px;top:254.4px;font-size:8.7px;color:#1a1a1a;transform-origin:0 0;transform:scaleX(.83)">FraserSuzuki</div>
<div class="t" style="left:233px;top:263.5px;font-size:8.7px;color:#1a1a1a;transform-origin:0 0;transform:scaleX(.83)">Gauss</div>
<div class="t" style="left:233px;top:272.7px;font-size:8.7px;color:#1a1a1a;transform-origin:0 0;transform:scaleX(.83)">GaussAmp</div>
<div class="t" style="left:233px;top:281.8px;font-size:8.7px;color:#fff;transform-origin:0 0;transform:scaleX(.83)">Gaussian</div>
<div class="t" style="left:233px;top:290.9px;font-size:8.7px;color:#1a1a1a;transform-origin:0 0;transform:scaleX(.83)">Gaussian_LorenCross</div>
<div class="t" style="left:233px;top:300.1px;font-size:8.7px;color:#1a1a1a;transform-origin:0 0;transform:scaleX(.83)">GaussMod</div>
<div class="t" style="left:233px;top:309.2px;font-size:8.7px;color:#1a1a1a;transform-origin:0 0;transform:scaleX(.83)">GCAS</div>
<div class="t" style="left:233px;top:318.3px;font-size:8.7px;color:#1a1a1a;transform-origin:0 0;transform:scaleX(.83)">HVL</div>
<div class="t" style="left:233px;top:327.4px;font-size:8.7px;color:#1a1a1a;transform-origin:0 0;transform:scaleX(.83)">InvsPoly</div>
<div class="t" style="left:233px;top:336.6px;font-size:8.7px;color:#1a1a1a;transform-origin:0 0;transform:scaleX(.83)">Lorentz</div>
<div class="t" style="left:233px;top:345.7px;font-size:8.7px;color:#1a1a1a;transform-origin:0 0;transform:scaleX(.83)">LogNormal</div>
<div class="t" style="left:233px;top:354.8px;font-size:8.7px;color:#1a1a1a;transform-origin:0 0;transform:scaleX(.83)">PearsonVII</div>
<div class="t" style="left:233px;top:364.0px;font-size:8.7px;color:#1a1a1a;transform-origin:0 0;transform:scaleX(.83)">PsdVoigt1</div>
<div class="t" style="left:233px;top:373.1px;font-size:8.7px;color:#1a1a1a;transform-origin:0 0;transform:scaleX(.83)">PsdVoigt2</div>
<div class="t" style="left:233px;top:382.2px;font-size:8.7px;color:#1a1a1a;transform-origin:0 0;transform:scaleX(.83)">Pulse</div>
<div class="t" style="left:233px;top:391.4px;font-size:8.7px;color:#1a1a1a;transform-origin:0 0;transform:scaleX(.83)">Sine</div>
<div class="t" style="left:233px;top:400.5px;font-size:8.7px;color:#1a1a1a;transform-origin:0 0;transform:scaleX(.83)">SineDamp</div>
<div class="t" style="left:233px;top:409.6px;font-size:8.7px;color:#1a1a1a;transform-origin:0 0;transform:scaleX(.83)">SineSqr</div>
<div class="t" style="left:233px;top:418.8px;font-size:8.7px;color:#1a1a1a;transform-origin:0 0;transform:scaleX(.83)">SchulzFlory</div>
<div class="t" style="left:233px;top:427.9px;font-size:8.7px;color:#1a1a1a;transform-origin:0 0;transform:scaleX(.83)">Voigt</div>
<div class="t" style="left:233px;top:437.0px;font-size:8.7px;color:#1a1a1a;transform-origin:0 0;transform:scaleX(.83)">Weibull3</div>
<div class="t" style="left:233px;top:446.1px;font-size:8.7px;color:#1a1a1a;transform-origin:0 0;transform:scaleX(.83)">NewPeakFitting (User)</div>
<!-- /DROPDOWN -->
<!-- CALLOUTS -->
<svg class="a" style="left:0;top:0" width="722" height="494" viewBox="0 0 722 494">
<path d="M29 373.3 H197 Q207 373.3 207 383.3 V442 Q207 452 197 452 H29 Q19 452 19 442 V383.3 Q19 373.3 29 373.3 Z" fill="#fff" stroke="#e0a038" stroke-width="1.6"/>
<path d="M133.6 373.3 L138.4 347.3 L175.3 373.3" fill="none" stroke="#e0a038" stroke-width="1.6" stroke-linejoin="miter"/>
<path d="M134.6 373.3 H174.3" stroke="#fff" stroke-width="2"/>
<path d="M308.5 94.5 H449 Q457 94.5 457 102.5 V138.8 Q457 146.8 449 146.8 H308.5 Q300.5 146.8 300.5 138.8 V102.5 Q300.5 94.5 308.5 94.5 Z" fill="#fff" stroke="#e0a038" stroke-width="1.6"/>
<path d="M316 146.8 L304.5 169.5 L321 146.8" fill="none" stroke="#e0a038" stroke-width="1.6"/>
<path d="M317 146.8 H320" stroke="#fff" stroke-width="2"/>
<path d="M558.6 81.3 H707 Q715 81.3 715 89.3 V128.7 Q715 136.7 707 136.7 H558.6 Q550.6 136.7 550.6 128.7 V89.3 Q550.6 81.3 558.6 81.3 Z" fill="#fff" stroke="#e0a038" stroke-width="1.6"/>
<path d="M598.5 136.7 L608.2 165.3 L622 136.7" fill="none" stroke="#e0a038" stroke-width="1.6"/>
<path d="M599.5 136.7 H621" stroke="#fff" stroke-width="2"/>
<path d="M127.5 322 L226 155" stroke="#ff00ff" stroke-width="3"/>
<path d="M229.5 149.5 L219.5 155.5 L227.5 160 Z" fill="#ff00ff"/>
<path d="M607.7 193 L579.5 264" stroke="#ff00ff" stroke-width="3"/>
<path d="M576.3 272.5 L575.5 262 L584.5 266 Z" fill="#ff00ff"/>
</svg>
<div class="t" style="left:29.5px;top:382.7px;font-size:15px;transform-origin:0 0;transform:scaleX(.861);font-weight:bold;color:#0000ff;line-height:20px">Step1. Click this button to<br>open <span style="color:#111">Peak Fit Parameters</span><br>dialog</div>
<div class="t" style="left:307px;top:100.6px;font-size:15px;transform-origin:0 0;transform:scaleX(.861);font-weight:bold;color:#0000ff;line-height:20px">Step2. Select a fitting<br>function for all peaks</div>
<div class="t" style="left:556.5px;top:88.6px;font-size:15px;transform-origin:0 0;transform:scaleX(.861);font-weight:bold;color:#0000ff;line-height:20px">Step3. Click this button<br>to fit till converge</div>
<!-- /CALLOUTS -->
</body></html>
